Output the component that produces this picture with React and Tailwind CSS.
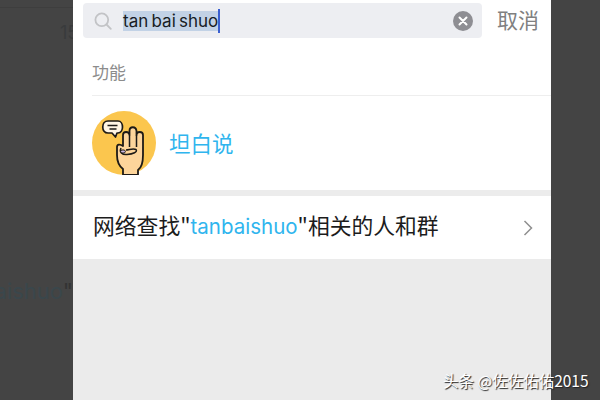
const font = { fontFamily: '"Noto Sans CJK SC", sans-serif' };
const latin = { fontFamily: "Inter, sans-serif" };

function HandLogo() {
  return (
    <svg width="64" height="64" viewBox="0 0 64 64" className="shrink-0">
      <circle cx="32" cy="32" r="32" fill="#fbc64e" />
      <path d="M31 64 L31 58 C27 55 25 50 25 44 L25 36 C25 33 28 33 31 35 L31 24 C31 20 37 20 37.500 24 L37.500 20 C37.500 15 44 15 44.500 20 L44.500 24 C44.500 20 51 20 51 24 L51 44 C51 52 49 57 46 59 L46 64 Z" fill="#fdd59b" stroke="#1d1a16" strokeWidth="1.800" strokeLinejoin="round" />
      <path d="M37.500 24 L37.500 36 M44.500 24 L44.500 36" stroke="#1d1a16" strokeWidth="1.500" fill="none" />
      <path d="M29 37 C27 41 30 44 35 43.500 C41 43 46 41 44 38.500 C41 37 37 39 34 39" fill="#fdd59b" stroke="#1d1a16" strokeWidth="1.500" />
      <ellipse cx="31" cy="40.500" rx="2.400" ry="1.600" fill="#c9b6e0" stroke="#1d1a16" strokeWidth="1" />
      <path d="M16 10 L26 10 C32 10 32 22 26 22 L25 22 L23.500 26 L20 22 L16 22 C9 22 9 10 16 10 Z" fill="#fff5e3" stroke="#1d1a16" strokeWidth="1.700" strokeLinejoin="round" />
      <path d="M15.500 14.500 L25.500 14.500 M17.500 18 L24.500 18" stroke="#1d1a16" strokeWidth="1.400" />
    </svg>
  );
}

export default function App() {
  return (
    <div className="relative flex h-[400px] w-[600px] overflow-hidden bg-[#444444]" style={font}>
      <div className="flex w-[73px] shrink-0 flex-col overflow-hidden bg-[#444444] text-[#393b3c]">
        <div className="h-[8px] shrink-0 border-b border-[#3e3e3e]" />
        <div className="mt-[13px] h-[24px] pl-[60px] text-[18px] leading-[24px] whitespace-nowrap" style={latin}>15</div>
        <div className="mt-[231px] flex justify-end whitespace-nowrap text-[22px] leading-[30px] text-[#3a474c]" style={latin}>
          <span>aishuo<span className="text-[#333333]">"</span></span>
        </div>
      </div>

      <main className="flex w-[478px] shrink-0 flex-col bg-white">
        <div className="flex h-[41px] shrink-0 items-start pt-[3px] pl-[10px]">
          <div className="flex h-[35px] w-[399px] items-center rounded-[4px] bg-[#edeef2] pr-[9px] pl-[11px]">
            <svg width="18" height="18" viewBox="0 0 18 18" fill="none" stroke="#c2c3c6" strokeWidth="1.800" strokeLinecap="round" className="shrink-0">
              <circle cx="7.800" cy="7.800" r="6.400" />
              <path d="M12.500 12.500 L16.800 16.800" />
            </svg>
            <div className="ml-[11px] flex h-[27px] items-center" style={latin}>
              <span className="flex h-[20px] items-center bg-[#c2d2e6] text-[17px] leading-[20px] [word-spacing:-1.500px] whitespace-pre text-[#171c24]">tan bai shuo</span>
              <span className="h-[24px] w-[2px] bg-[#3a5fd0]" />
            </div>
            <span className="ml-auto flex h-[20px] w-[20px] items-center justify-center rounded-full bg-[#8e8e93]">
              <svg width="10" height="10" viewBox="0 0 10 10" stroke="#fff" strokeWidth="2" strokeLinecap="round">
                <path d="M1.500 1.500 L8.500 8.500 M8.500 1.500 L1.500 8.500" />
              </svg>
            </span>
          </div>
          <span className="ml-[15px] -mt-[1px] text-[21px] leading-[35px] whitespace-nowrap text-[#808080]">取消</span>
        </div>

        <div className="ml-[19px] flex h-[55px] shrink-0 items-center border-b border-[#eeeeee] pt-[8px] text-[17px] text-[#8c8c8c]">功能</div>

        <div className="flex h-[94px] shrink-0 items-center pb-[15px] pt-[15px] pl-[19px]">
          <HandLogo />
          <span className="ml-[13px] text-[21.500px] text-[#2fb5ee]">坦白说</span>
        </div>

        <div className="h-[6px] shrink-0 bg-[#ececec]" />

        <div className="flex h-[63px] shrink-0 items-center pr-[18px] pb-[3px] pl-[20px] text-[21.800px] text-[#1c1c1c]">
          <span className="whitespace-pre">
            网络查找"<span className="text-[20.500px] text-[#2fb5ee]" style={latin}>tanbaishuo</span>"相关的人和群
          </span>
          <svg width="10" height="16" viewBox="0 0 10 16" fill="none" stroke="#8f8f8f" strokeWidth="1.500" className="ml-auto mt-[3px]">
            <path d="M1.500 1 L8.500 8 L1.500 15" />
          </svg>
        </div>

        <div className="flex-1 bg-[#ebebeb]" />
      </main>

      <div className="flex-1 bg-[#444444]" />

      <div className="absolute top-[370px] left-[443px] text-[15.500px] leading-[21px] whitespace-nowrap text-white [text-shadow:1px_1px_1px_#222]">
        头条 @佐佐佑佑2015
      </div>
    </div>
  );
}
